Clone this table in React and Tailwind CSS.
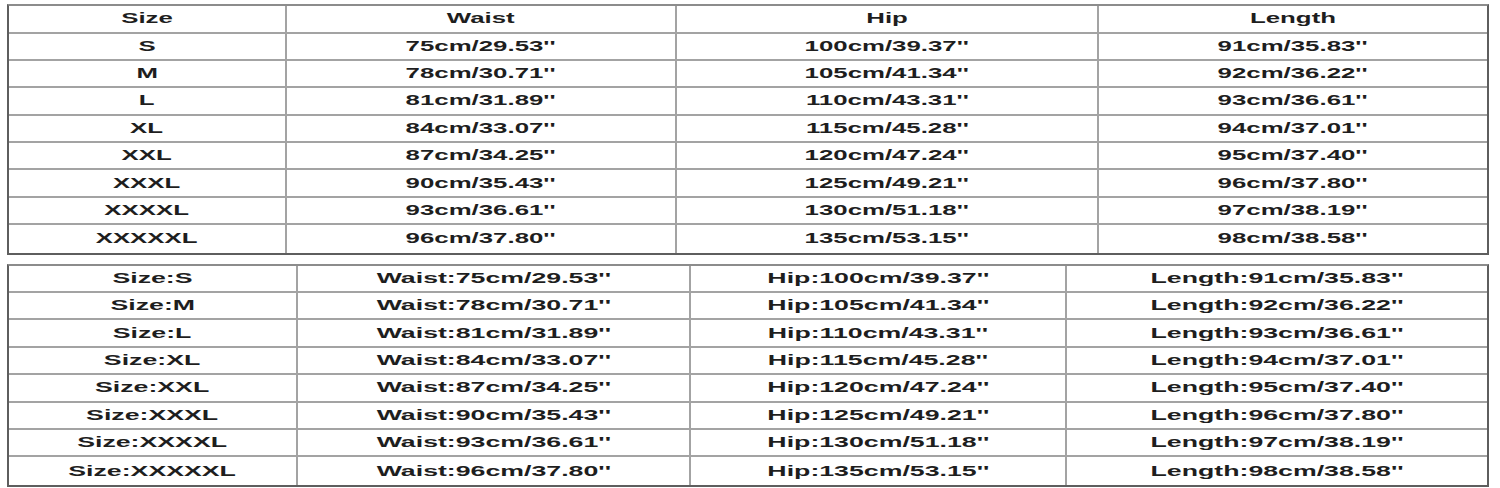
import React from "react";

const t1 = [
  ["Size", "Waist", "Hip", "Length"],
  ["S", "75cm/29.53''", "100cm/39.37''", "91cm/35.83''"],
  ["M", "78cm/30.71''", "105cm/41.34''", "92cm/36.22''"],
  ["L", "81cm/31.89''", "110cm/43.31''", "93cm/36.61''"],
  ["XL", "84cm/33.07''", "115cm/45.28''", "94cm/37.01''"],
  ["XXL", "87cm/34.25''", "120cm/47.24''", "95cm/37.40''"],
  ["XXXL", "90cm/35.43''", "125cm/49.21''", "96cm/37.80''"],
  ["XXXXL", "93cm/36.61''", "130cm/51.18''", "97cm/38.19''"],
  ["XXXXXL", "96cm/37.80''", "135cm/53.15''", "98cm/38.58''"],
];

const t2 = t1.slice(1).map((r) => [
  "Size:" + r[0],
  "Waist:" + r[1],
  "Hip:" + r[2],
  "Length:" + r[3],
]);

function Cell({ text, last, lastRow, h, scale }) {
  return (
    <div
      className={
        "flex items-center justify-center overflow-visible border-[#a3a3a3] pb-[2px] " +
        (last ? "" : "border-r-2 ") +
        (lastRow ? "" : "border-b-2 ") +
        h
      }
    >
      <span
        className={
          "inline-block whitespace-nowrap text-[15px] font-bold leading-none text-[#1e1e1e] " +
          scale
        }
      >
        {text}
      </span>
    </div>
  );
}

function Table({ rows, cols, className, firstH, scale }) {
  return (
    <div
      className={
        "grid w-[1482px] border-2 border-[#5e5e5e] border-t-[#8c8c8c] bg-white " +
        cols +
        " " +
        className
      }
    >
      {rows.map((r, i) =>
        r.map((c, j) => (
          <Cell
            key={i + "-" + j}
            text={c}
            last={j === 3}
            lastRow={i === rows.length - 1}
            scale={scale}
            h={i === 0 && firstH ? firstH : "h-[27.4px]"}
          />
        ))
      )}
    </div>
  );
}

export default function App() {
  return (
    <div
      className="h-[488px] w-[1500px] overflow-hidden bg-white pl-[7px] pt-[4px]"
      style={{ fontFamily: '"Liberation Sans", Arial, sans-serif' }}
    >
      <Table
        rows={t1}
        cols="grid-cols-[278px_390px_422px_388px]"
        firstH="h-[27.5px]"
        scale="scale-x-[1.72]"
        className=""
      />
      <Table
        rows={t2}
        cols="grid-cols-[289px_393px_376px_420px]"
        scale="scale-x-[1.78]"
        className="mt-[9px]"
      />
    </div>
  );
}
